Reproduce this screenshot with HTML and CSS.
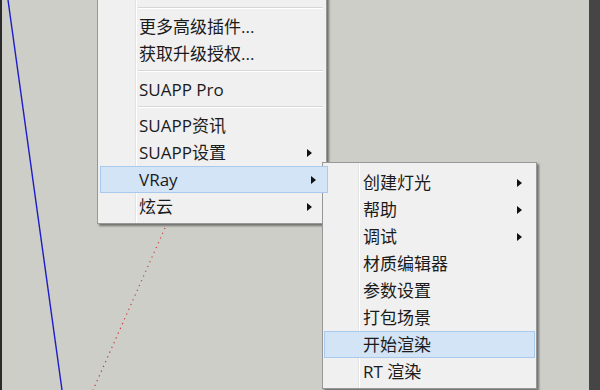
FILE: index.html
```html
<!DOCTYPE html>
<html lang="zh-CN">
<head>
    <meta charset="UTF-8">
    <meta name="viewport" content="width=device-width, initial-scale=1.0">
    <title>SUAPP 菜单</title>
    <link rel="stylesheet" href="styles.css">
</head>
<body>
    <div class="viewport">
        <svg class="axes" width="600" height="390" viewBox="0 0 600 390">
            <line x1="8" y1="0" x2="62" y2="390" stroke="#1c1cc8" stroke-width="1.4"/>
            <line x1="165" y1="228" x2="93" y2="390" stroke="#c83c3c" stroke-width="1.2" stroke-dasharray="1.2 4"/>
        </svg>
        <div class="edge-right"></div>

        <div class="menu main-menu">
            <div class="item"></div>
            <div class="sep"></div>
            <div class="item">更多高级插件...</div>
            <div class="item">获取升级授权...</div>
            <div class="sep"></div>
            <div class="item">SUAPP Pro</div>
            <div class="sep"></div>
            <div class="item">SUAPP资讯</div>
            <div class="item sub">SUAPP设置</div>
            <div class="item sub active">VRay</div>
            <div class="item sub">炫云</div>
        </div>

        <div class="menu vray-menu">
            <div class="item sub">创建灯光</div>
            <div class="item sub">帮助</div>
            <div class="item sub">调试</div>
            <div class="item">材质编辑器</div>
            <div class="item">参数设置</div>
            <div class="item">打包场景</div>
            <div class="item active">开始渲染</div>
            <div class="item">RT 渲染</div>
        </div>
    </div>
</body>
</html>
```

FILE: styles.css
```css
body {
    margin: 0;
    font-family: "Open Sans", "Noto Sans CJK SC", sans-serif;
    background: #cecec9;
}
.viewport {
    position: relative;
    width: 600px;
    height: 390px;
    overflow: hidden;
    background: #cecec9;
    border-left: 2px solid #2a2a2a;
    box-sizing: border-box;
}
.axes {
    position: absolute;
    left: -2px;
    top: 0;
}
.edge-right {
    position: absolute;
    right: 0;
    top: 0;
    width: 11px;
    height: 100%;
    background: #454545;
}
.menu {
    position: absolute;
    background: #f0f0f0;
    border: 1px solid #979797;
    box-shadow: 2px 2px 2px rgba(0, 0, 0, 0.45);
    box-sizing: border-box;
}
.menu::before {
    content: "";
    position: absolute;
    top: 0;
    bottom: 0;
    border-left: 1px solid #e2e3e3;
    border-right: 1px solid #ffffff;
}
.main-menu {
    left: 95px;
    top: -26px;
    width: 230px;
    padding: 2px 2px 3px 2px;
}
.main-menu::before {
    left: 37px;
}
.vray-menu {
    left: 320px;
    top: 162px;
    width: 215px;
    padding: 6px 1px 3px 1px;
}
.vray-menu::before {
    left: 35px;
}
.item {
    position: relative;
    height: 27px;
    line-height: 26px;
    font-size: 17px;
    color: #1b1b1b;
    white-space: nowrap;
    box-sizing: border-box;
    border: 1px solid transparent;
}
.main-menu .item {
    padding-left: 38px;
}
.vray-menu .item {
    padding-left: 38px;
}
.item.active {
    background: #d2e4f6;
    border-color: #a9caed;
    z-index: 1;
}
.main-menu .item.active {
    margin-right: -4px;
}
.item.sub::after {
    content: "";
    position: absolute;
    top: 9px;
    border-left: 5px solid #111;
    border-top: 4.5px solid transparent;
    border-bottom: 4.5px solid transparent;
}
.main-menu .item.sub::after {
    right: 11px;
}
.vray-menu .item.sub::after {
    right: 12px;
}
.sep {
    height: 9px;
    position: relative;
}
.sep::after {
    content: "";
    position: absolute;
    left: 38px;
    right: 1px;
    top: 3px;
    border-top: 1px solid #d7d7d7;
    border-bottom: 1px solid #ffffff;
}
```
